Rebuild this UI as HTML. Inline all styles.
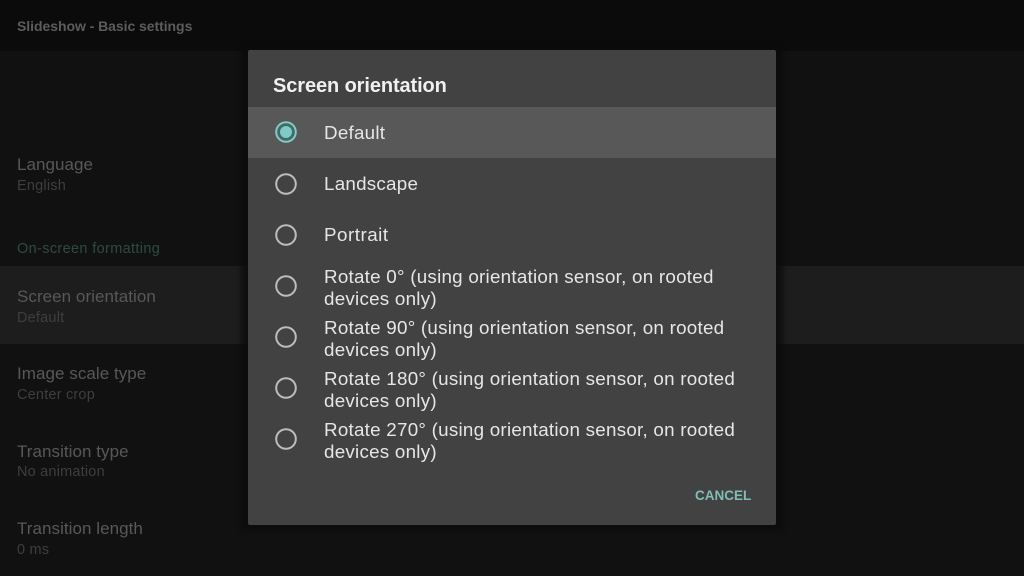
<!DOCTYPE html>
<html><head><meta charset="utf-8">
<style>
html,body{margin:0;padding:0;background:#111;}
#p{position:relative;width:1024px;height:576px;overflow:hidden;background:#111;font-family:"Liberation Sans",sans-serif;}
#p div,#p svg{position:absolute;}
.t{white-space:nowrap;}
.a{left:17px;font-size:17px;line-height:20px;color:#585858;letter-spacing:.05px;}
.b{left:17px;font-size:14.5px;line-height:18px;color:#3e3e3e;letter-spacing:.2px;}
.o{left:324px;font-size:18.8px;line-height:22px;color:#e6e6e6;letter-spacing:.25px;}
</style></head><body>
<div id="p">
<div style="left:0;top:0;width:1024px;height:51px;background:#0b0b0b"></div>
<div class="t" style="left:17px;top:17px;font-size:14px;line-height:18px;font-weight:bold;color:#5c5c5c;letter-spacing:-.05px">Slideshow - Basic settings</div>
<div style="left:0;top:266px;width:1024px;height:78px;background:#1d1d1d"></div>

<div class="t a" style="top:155px">Language</div>
<div class="t b" style="top:177px">English</div>
<div class="t" style="left:17px;top:240px;font-size:14.5px;line-height:18px;color:#2d4b45;letter-spacing:.35px">On-screen formatting</div>
<div class="t a" style="top:287px">Screen orientation</div>
<div class="t b" style="top:309px">Default</div>
<div class="t a" style="top:364px">Image scale type</div>
<div class="t b" style="top:386px">Center crop</div>
<div class="t a" style="top:442px">Transition type</div>
<div class="t b" style="top:463px">No animation</div>
<div class="t a" style="top:519px">Transition length</div>
<div class="t b" style="top:541px">0 ms</div>

<div style="left:241px;top:46px;width:542px;height:484px;background:#0b0b0b;filter:blur(3px);opacity:.8"></div>
<div style="left:248px;top:50px;width:528px;height:475px;background:#424242;border-radius:2px"></div>
<div style="left:248px;top:107px;width:528px;height:51px;background:#585858"></div>

<div class="t" style="left:273px;top:74px;font-size:20px;line-height:24px;font-weight:bold;color:#f0f0f0;letter-spacing:-.1px">Screen orientation</div>

<svg style="left:270px;top:116px" width="32" height="338" viewBox="0 0 32 338">
<g fill="none" stroke="#bdbdbd" stroke-width="2">
<circle cx="16" cy="68" r="9.800"/>
<circle cx="16" cy="119" r="9.800"/>
<circle cx="16" cy="170" r="9.800"/>
<circle cx="16" cy="221" r="9.800"/>
<circle cx="16" cy="272" r="9.800"/>
<circle cx="16" cy="323" r="9.800"/>
</g>
<circle cx="16" cy="16" r="9.800" fill="#3f6a66" stroke="#80cbc4" stroke-width="2"/>
<circle cx="16" cy="16" r="6" fill="#80cbc4"/>
</svg>

<div class="t o" style="top:122px">Default</div>
<div class="t o" style="top:173px">Landscape</div>
<div class="t o" style="top:224px;letter-spacing:.5px">Portrait</div>
<div class="t o" style="top:266px">Rotate 0° (using orientation sensor, on rooted</div>
<div class="t o" style="top:288px">devices only)</div>
<div class="t o" style="top:317px">Rotate 90° (using orientation sensor, on rooted</div>
<div class="t o" style="top:339px">devices only)</div>
<div class="t o" style="top:368px">Rotate 180° (using orientation sensor, on rooted</div>
<div class="t o" style="top:390px">devices only)</div>
<div class="t o" style="top:419px">Rotate 270° (using orientation sensor, on rooted</div>
<div class="t o" style="top:441px">devices only)</div>

<div class="t" style="left:695px;top:487px;font-size:13.500px;line-height:18px;font-weight:bold;color:#7fbdb5">CANCEL</div>
</div>
</body></html>
